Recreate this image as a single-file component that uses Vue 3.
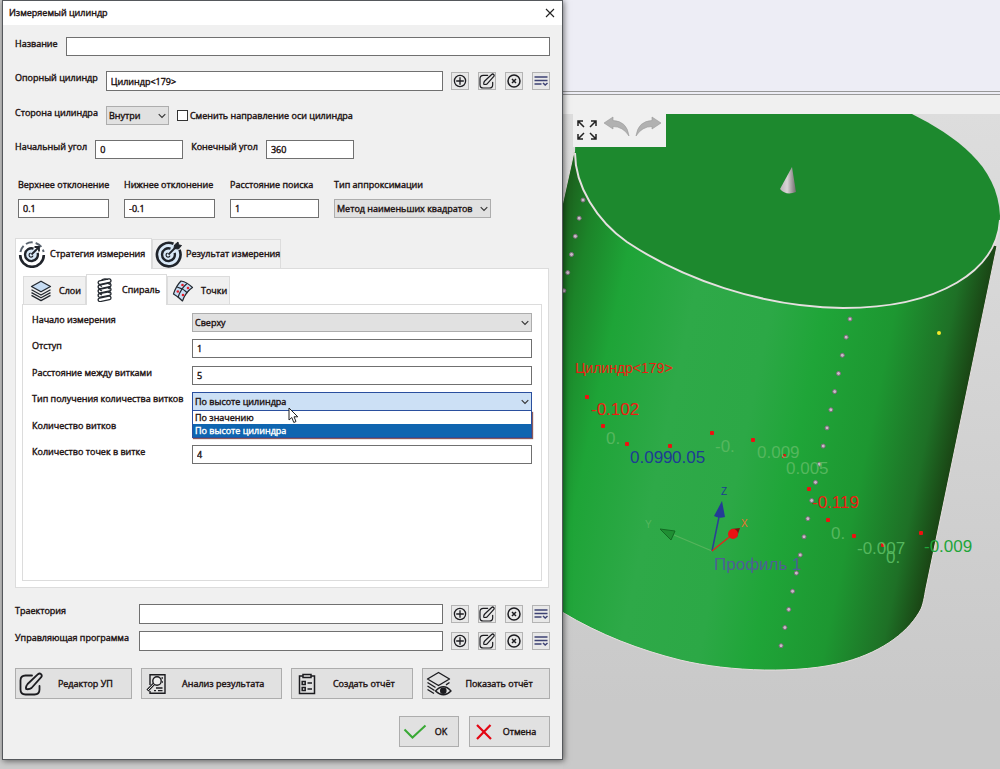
<script setup>
import { ref } from 'vue'

const name       = ref('')
const refCyl     = ref('Цилиндр<179>')
const side       = ref('Внутри')
const flipAxis   = ref(false)
const startAngle = ref('0')
const endAngle   = ref('360')
const upperDev   = ref('0.1')
const lowerDev   = ref('-0.1')
const searchDist = ref('1')
const approx     = ref('Метод наименьших квадратов')
const startFrom  = ref('Сверху')
const offset     = ref('1')
const pitch      = ref('5')
const turnsCount = ref('')
const turnPoints = ref('4')
const trajectory = ref('')
const program    = ref('')

// ── Open drop-down ────────────────────────────────────────────
const turnTypes = ['По значению', 'По высоте цилиндра']
const turnType  = ref('По высоте цилиндра')
const listOpen  = ref(true)

const pick = (t) => {
  turnType.value = t
  listOpen.value = false
}

const tools = [
  { id: 'add', title: 'Добавить' },
  { id: 'edit', title: 'Изменить' },
  { id: 'clear', title: 'Очистить' },
  { id: 'list', title: 'Выбрать' }
]

// ── Scene ─────────────────────────────────────────────────────
const leftDots  = Array.from({ length: 6 }, (_, i) => ({ x: 583 - i * 3.83, y: 200 + i * 18.15 }))
const rightDots = Array.from({ length: 19 }, (_, i) => ({ x: 850 - i * 3.83, y: 319 + i * 18.15 }))

const probes = [
  [587, 397], [603, 426], [627, 444], [670, 446], [712, 433], [753, 440],
  [784, 456], [809, 489], [828, 520], [854, 536], [883, 545], [921, 533]
]

const marks = [
  { x: 591, y: 415, t: '-0.102', c: 'red' },
  { x: 606, y: 444, t: '0.', c: 'pale' },
  { x: 630, y: 463, t: '0.099', c: 'blue' },
  { x: 672, y: 463, t: '0.05', c: 'blue' },
  { x: 715, y: 452, t: '-0.', c: 'pale' },
  { x: 757, y: 458, t: '0.009', c: 'pale' },
  { x: 786, y: 474, t: '0.005', c: 'pale' },
  { x: 812, y: 508, t: '-0.119', c: 'red' },
  { x: 831, y: 539, t: '0.', c: 'pale' },
  { x: 857, y: 554, t: '-0.007', c: 'pale' },
  { x: 886, y: 563, t: '0.', c: 'pale' },
  { x: 924, y: 552, t: '-0.009', c: 'green' },
  { x: 714, y: 570, t: 'Профиль 1', c: 'violet' }
]
</script>

<template>
  <div class="desktop">
    <!-- Shared icon shapes -->
    <svg class="defs" aria-hidden="true">
      <symbol id="i-add" viewBox="0 0 16 16">
        <g fill="none" stroke="#1c1c20" stroke-width="1.3">
          <circle cx="8" cy="8" r="5.6"/><path d="M8 4.2v7.6M4.2 8h7.6"/>
        </g>
      </symbol>
      <symbol id="i-edit" viewBox="0 0 24 24">
        <g fill="none" stroke="#1c1c20" stroke-width="1.8" stroke-linejoin="round" stroke-linecap="round">
          <path d="M13 3.5H6.5Q1.5 3.5 1.5 8.5V17.5Q1.5 22.5 6.5 22.5H15.5Q20.5 22.5 20.5 17.5V14"/>
          <path d="M19 2.2Q20.6 .8 22 2.2Q23.4 3.6 22.2 5.2L12.5 16Q10.8 17.4 7.8 17.2Q6.8 17.2 7 16Q7.2 13.5 8.6 12Z"/>
        </g>
      </symbol>
      <symbol id="i-clear" viewBox="0 0 16 16">
        <g fill="none" stroke="#1c1c20" stroke-width="1.5">
          <circle cx="8" cy="8" r="6"/><path d="M6 6l4 4M10 6l-4 4"/>
        </g>
      </symbol>
      <symbol id="i-list" viewBox="0 0 16 16">
        <g fill="none" stroke="#3d4273" stroke-width="1.5">
          <path d="M1.5 4h13M1.5 7.5h13M1.5 11h7"/><path d="M10 10l2.2 2L14.5 10"/>
        </g>
      </symbol>
      <symbol id="i-chev" viewBox="0 0 8 6">
        <path d="M.7 1.2L4 4.5L7.3 1.2" fill="none" stroke="#333" stroke-width="1.1"/>
      </symbol>
    </svg>

    <!-- Dialog -->
    <form class="dialog" @submit.prevent>
      <header class="titlebar">
        <h1 class="title">Измеряемый цилиндр</h1>
        <button type="button" class="close" aria-label="Закрыть">
          <svg width="10" height="10" viewBox="0 0 10 10"><path d="M1 1l8 8M9 1l-8 8" stroke="#222" stroke-width="1.1"/></svg>
        </button>
      </header>

      <div class="body">
        <div class="row row-name">
          <label for="f-name">Название</label>
          <input id="f-name" v-model="name" class="text grow" type="text">
        </div>

        <div class="row">
          <label for="f-ref">Опорный цилиндр</label>
          <input id="f-ref" v-model="refCyl" class="text tall grow" type="text">
          <div class="tools">
            <button v-for="t in tools" :key="t.id" type="button" class="tool" :aria-label="t.title">
              <svg width="16" height="16"><use :href="'#i-' + t.id"/></svg>
            </button>
          </div>
        </div>

        <div class="row">
          <label for="f-side">Сторона цилиндра</label>
          <span class="select side">
            <select id="f-side" v-model="side"><option>Внутри</option><option>Снаружи</option></select>
            <svg class="chev" width="8" height="6"><use href="#i-chev"/></svg>
          </span>
          <span class="check">
            <input id="f-flip" v-model="flipAxis" type="checkbox">
            <label for="f-flip">Сменить направление оси цилиндра</label>
          </span>
        </div>

        <div class="row">
          <label for="f-start">Начальный угол</label>
          <input id="f-start" v-model="startAngle" class="text angle" type="text">
          <label for="f-end">Конечный угол</label>
          <input id="f-end" v-model="endAngle" class="text angle" type="text">
        </div>

        <div class="quad">
          <div class="cell">
            <label for="f-up">Верхнее отклонение</label>
            <input id="f-up" v-model="upperDev" class="text" type="text">
          </div>
          <div class="cell">
            <label for="f-low">Нижнее отклонение</label>
            <input id="f-low" v-model="lowerDev" class="text" type="text">
          </div>
          <div class="cell">
            <label for="f-dist">Расстояние поиска</label>
            <input id="f-dist" v-model="searchDist" class="text" type="text">
          </div>
          <div class="cell">
            <label for="f-approx">Тип аппроксимации</label>
            <span class="select">
              <select id="f-approx" v-model="approx"><option>Метод наименьших квадратов</option></select>
              <svg class="chev" width="8" height="6"><use href="#i-chev"/></svg>
            </span>
          </div>
        </div>

        <!-- Outer tabs -->
        <div class="tabs outer" role="tablist">
          <button type="button" class="tab active t-strategy" role="tab" aria-selected="true">
            <svg width="28" height="28" viewBox="0 0 28 28" fill="none" stroke="#20242b">
              <path d="M2.2 15A11.8 11.8 0 0 0 25.8 15" stroke-width="2.6"/>
              <path d="M2.4 12A11.8 11.8 0 0 1 25.6 12" stroke-width="2" stroke="#59636e" stroke-dasharray="7 3"/>
              <circle cx="13.5" cy="14.5" r="6.5" fill="#d9e9f8" stroke="none"/>
              <path d="M15.5 8.6A6.4 6.4 0 1 0 19.6 12.8" stroke-width="2.4"/>
              <path d="M12.6 13.2A2 2 0 1 0 15 15.6" stroke-width="1.2"/>
              <path d="M13.5 14.5L20.5 7.5M16.5 7h4.5v4.5" stroke-width="1.8"/>
            </svg>
            Стратегия измерения
          </button>
          <button type="button" class="tab t-result" role="tab" aria-selected="false">
            <svg width="28" height="28" viewBox="0 0 28 28" fill="none" stroke="#20242b">
              <circle cx="13.5" cy="14.5" r="11.5" fill="#d9e9f8" stroke="none"/>
              <path d="M18.5 3.8A11.8 11.8 0 1 0 24.5 9.8" stroke-width="2.6"/>
              <path d="M15.5 8.6A6.4 6.4 0 1 0 19.6 12.8" stroke-width="2.4"/>
              <path d="M12.6 13.2A2 2 0 1 0 15 15.6" stroke-width="1.2"/>
              <path d="M13.5 14.5L21 7" stroke-width="1.8"/>
              <path d="M19 8.5L19.5 5L23 2L23.5 4.8L26.5 5.5L23.5 9Z" fill="#20242b" stroke-width="1"/>
            </svg>
            Результат измерения
          </button>
        </div>

        <div class="panel">
          <!-- Inner tabs -->
          <div class="tabs inner" role="tablist">
            <button type="button" class="tab t-layers" role="tab" aria-selected="false">
              <svg width="22" height="22" viewBox="0 0 22 22" fill="none" stroke="#23282f" stroke-width="1.3" stroke-linejoin="round">
                <path d="M11 1.2L20.5 6.5L11 11.8L1.5 6.5Z" fill="#c6dcf3"/>
                <path d="M1.5 9.8L11 15L20.5 9.8M1.5 12.6L11 17.8L20.5 12.6M1.5 15.4L11 20.6L20.5 15.4"/>
              </svg>
              Слои
            </button>
            <button type="button" class="tab active t-spiral" role="tab" aria-selected="true">
              <svg width="18" height="24" viewBox="0 0 18 24" fill="none" stroke="#23282f" stroke-width="1.3">
                <rect v-for="i in 5" :key="i" x="2" :y="i * 4.3 - 2.6" width="13" height="3.6" rx="1.8" :transform="`rotate(-12 9 ${i * 4.3 - 1})`"/>
                <path d="M5.5 2.5Q7.5 0 12 1.5M4 7.5l2 1M4 12l2 1M4 16l2 1M12 5.5l2 1M12 10l2 1M12 14l2 1"/>
              </svg>
              Спираль
            </button>
            <button type="button" class="tab t-points" role="tab" aria-selected="false">
              <svg width="22" height="24" viewBox="0 0 22 24" fill="none" stroke="#23282f" stroke-width="1.2" stroke-linejoin="round">
                <path d="M9 2Q15 3 20.5 8.5Q13.5 13 10.5 22Q6 17.5 1.5 15Q4 7 9 2Z" fill="#c6dcf3"/>
                <path d="M15 4.5Q8.5 10 6 18.5M5 8Q11 9.5 15.5 14"/>
                <g fill="#e3202b" stroke="none">
                  <circle cx="10.5" cy="6" r="1.3"/><circle cx="16" cy="9" r="1.3"/>
                  <circle cx="5.8" cy="12.5" r="1.3"/><circle cx="11" cy="16" r="1.3"/>
                </g>
              </svg>
              Точки
            </button>
          </div>

          <div class="sheet">
            <div class="fields">
              <label for="f-from">Начало измерения</label>
              <span class="select">
                <select id="f-from" v-model="startFrom"><option>Сверху</option><option>Снизу</option></select>
                <svg class="chev" width="8" height="6"><use href="#i-chev"/></svg>
              </span>

              <label for="f-offset">Отступ</label>
              <input id="f-offset" v-model="offset" class="text" type="text">

              <label for="f-pitch">Расстояние между витками</label>
              <input id="f-pitch" v-model="pitch" class="text" type="text">

              <label for="f-type">Тип получения количества витков</label>
              <span class="select open">
                <select id="f-type" v-model="turnType">
                  <option v-for="t in turnTypes" :key="t">{{ t }}</option>
                </select>
                <svg class="chev" width="8" height="6"><use href="#i-chev"/></svg>
                <ul v-if="listOpen" class="list" role="listbox">
                  <li
                    v-for="t in turnTypes"
                    :key="t"
                    role="option"
                    :aria-selected="t === turnType"
                    :class="['item', t === turnType ? 'current' : '']"
                    @click="pick(t)"
                  >{{ t }}</li>
                </ul>
                <svg class="pointer" width="11" height="17" viewBox="0 0 11 17" aria-hidden="true">
                  <path d="M1 1V13L3.8 10.5L5.8 15.5L8 14.5L6 9.8H9.8Z" fill="#fff" stroke="#222"/>
                </svg>
              </span>

              <label for="f-turns">Количество витков</label>
              <input id="f-turns" v-model="turnsCount" class="text" type="text">

              <label for="f-pts">Количество точек в витке</label>
              <input id="f-pts" v-model="turnPoints" class="text" type="text">
            </div>
          </div>
        </div>

        <div class="row row-out">
          <label for="f-traj">Траектория</label>
          <input id="f-traj" v-model="trajectory" class="text tall grow" type="text">
          <div class="tools">
            <button v-for="t in tools" :key="t.id" type="button" class="tool" :aria-label="t.title">
              <svg width="16" height="16"><use :href="'#i-' + t.id"/></svg>
            </button>
          </div>
        </div>
        <div class="row row-out">
          <label for="f-prog">Управляющая программа</label>
          <input id="f-prog" v-model="program" class="text tall grow" type="text">
          <div class="tools">
            <button v-for="t in tools" :key="t.id" type="button" class="tool" :aria-label="t.title">
              <svg width="16" height="16"><use :href="'#i-' + t.id"/></svg>
            </button>
          </div>
        </div>

        <div class="actions">
          <button type="button" class="btn b-editor">
            <svg width="24" height="24"><use href="#i-edit"/></svg>
            <span>Редактор УП</span>
          </button>
          <button type="button" class="btn b-analysis">
            <svg width="24" height="24" viewBox="0 0 24 24" fill="none" stroke="#1c1c20" stroke-width="1.4">
              <path d="M5 13V2.7H20V21.3H5V19"/>
              <circle cx="12" cy="9" r="4.2" fill="#eee"/>
              <path d="M8.8 12L2.5 18.5" stroke-width="3"/><path d="M8.6 12.2L3 18" stroke="#eee" stroke-width="1"/>
              <path d="M16.5 6h1.5M17 10h1M11 16h6.5M9 18.6h2M13 18.6h4.5"/>
            </svg>
            <span>Анализ результата</span>
          </button>
          <button type="button" class="btn b-report">
            <svg width="24" height="24" viewBox="0 0 24 24" fill="none" stroke="#1c1c20" stroke-width="1.5">
              <path d="M8 4H4.5V21.5H19.5V4H16"/>
              <rect x="8" y="2.5" width="8" height="3"/>
              <rect x="7.2" y="9.5" width="3" height="3"/><rect x="7.2" y="15.5" width="3" height="3"/>
              <path d="M12.5 11h4.5M12.5 17h4.5"/>
            </svg>
            <span>Создать отчёт</span>
          </button>
          <button type="button" class="btn b-show">
            <svg width="26" height="26" viewBox="0 0 26 26" fill="none" stroke="#1c1c20" stroke-width="1.4" stroke-linejoin="round">
              <path d="M12.5 1.5L23.5 8L12.5 14.5L1.5 8Z"/>
              <path d="M1.5 11.5L9.5 16.5M1.5 15L8.5 19.5M1.5 18.5L8 22.5M23.5 11.5L20 13.8"/>
              <path d="M9.5 20Q17.5 11.5 25 20Q17.5 27.5 9.5 20Z"/>
              <circle cx="17.3" cy="19.7" r="2.6" fill="#1c1c20"/>
            </svg>
            <span>Показать отчёт</span>
          </button>
        </div>

        <div class="confirm">
          <button type="submit" class="btn b-ok">
            <svg width="24" height="18" viewBox="0 0 24 18"><path d="M1.5 6.5L9.5 14.5L22.5 2.5" fill="none" stroke="#39a935" stroke-width="2"/></svg>
            <span>OK</span>
          </button>
          <button type="button" class="btn b-cancel">
            <svg width="18" height="18" viewBox="0 0 18 18"><path d="M2 2L16 16M15.5 2L2 16" fill="none" stroke="#e30613" stroke-width="2.2"/></svg>
            <span>Отмена</span>
          </button>
        </div>
      </div>
    </form>

    <!-- 3D view -->
    <main class="view">
      <div class="ribbon"></div>
      <div class="strip"></div>
      <div class="stage">
        <svg class="scene" viewBox="563 114 437 655" preserveAspectRatio="xMinYMin slice">
          <defs>
            <linearGradient id="side" gradientUnits="userSpaceOnUse" x1="574" y1="150" x2="999" y2="239">
              <stop offset="0" stop-color="#1c5f1d"/>
              <stop offset="0.07" stop-color="#1c8429"/>
              <stop offset="0.17" stop-color="#1ea437"/>
              <stop offset="0.34" stop-color="#2ea948"/>
              <stop offset="0.52" stop-color="#2ca846"/>
              <stop offset="0.64" stop-color="#1fa538"/>
              <stop offset="0.8" stop-color="#1d9731"/>
              <stop offset="0.93" stop-color="#1e7026"/>
              <stop offset="1" stop-color="#1a4414"/>
            </linearGradient>
            <linearGradient id="cone">
              <stop offset="0" stop-color="#b9b3b6"/>
              <stop offset="0.45" stop-color="#d9d4d6"/>
              <stop offset="1" stop-color="#6f6a6c"/>
            </linearGradient>
          </defs>

          <path fill="url(#side)" stroke="#e6dede" d="M574 152L562 206V612C600 635 640 650 680 660C730 672 800 674 845 662C885 651 910 630 921 609C924 602 925 592 926 588L997 246L850 200Z"/>
          <path fill="#1d892e" d="M576 114H912C955 136 998 165 1000 216C1000 268 942 308 843 308C760 307 681 278 627 242C597 221 575 186 575 153Z"/>
          <path class="rim" d="M575 153C575 186 597 221 627 242C681 278 760 307 843 308C940 308 997 270 1000 220"/>

          <path fill="url(#cone)" d="M792 167L780 189Q786 196 796 192Z"/>

          <circle v-for="(d, i) in leftDots" :key="'l' + i" class="dot" :cx="d.x" :cy="d.y" r="2"/>
          <rect v-for="(p, i) in probes" :key="'p' + i" class="probe" :x="p[0] - 2" :y="p[1] - 2" width="4" height="4" rx="1"/>
          <circle cx="939" cy="333" r="2" fill="#f4e92a"/>

          <!-- Axes -->
          <path d="M712 551L674 535" stroke="#55b45c" stroke-width="1.2"/>
          <path d="M660 529L675 531L671 540Z" fill="#1f8f33" stroke="#136b23"/>
          <path d="M712 551L719 517" stroke="#2b3f98" stroke-width="1.5"/>
          <path d="M722 501L714 516Q719 519 725 517Z" fill="#243b96"/>
          <path d="M712 551L733 534" stroke="#e8231a" stroke-width="1.3"/>
          <path d="M740 528L731 529L737 537Z" fill="#7c160e"/>
          <circle cx="733" cy="534" r="5" fill="#ea1313"/>
          <text class="axis blue" x="721" y="495">Z</text>
          <text class="axis orange" x="741" y="527">X</text>
          <text class="axis pale" x="645" y="528">Y</text>

          <text class="caption red" x="575" y="373">Цилиндр&lt;179&gt;</text>
          <circle v-for="(d, i) in rightDots" :key="'r' + i" class="dot" :cx="d.x" :cy="d.y" r="2"/>
          <text v-for="(m, i) in marks" :key="'m' + i" :class="['mark', m.c]" :x="m.x" :y="m.y">{{ m.t }}</text>
        </svg>

        <div class="viewbar">
          <button type="button" aria-label="Показать всё">
            <svg width="22" height="22" viewBox="0 0 22 22" fill="none" stroke="#222" stroke-width="1.5">
              <path d="M2 7V2h5M2 2l6 6M15 2h5v5M20 2l-6 6M2 15v5h5M2 20l6-6M15 20h5v-5M20 20l-6-6"/>
            </svg>
          </button>
          <button type="button" aria-label="Назад">
            <svg width="27" height="22" viewBox="0 0 27 22"><path d="M1 7L10 1V4.5Q24 5 26 20Q20 10.5 10 10.5V13Z" fill="#b1b1b1" stroke="#999" stroke-width=".6"/></svg>
          </button>
          <button type="button" aria-label="Вперёд">
            <svg width="27" height="22" viewBox="0 0 27 22"><path d="M26 7L17 1V4.5Q3 5 1 20Q7 10.5 17 10.5V13Z" fill="#b1b1b1" stroke="#999" stroke-width=".6"/></svg>
          </button>
        </div>
      </div>
    </main>
  </div>
</template>

<style>
body {
  margin: 0;
  background: #cbcbcb;
}
</style>

<style scoped>
.desktop {
  display: grid;
  grid-template-columns: minmax(0, 563fr) minmax(0, 437fr);
  min-height: 100vh;
  font-family: 'Open Sans', 'Noto Sans', sans-serif;
  font-size: 9px;
  font-weight: 400;
  line-height: 14px;
  color: #1f1414;
  background: #cbcbcb;
}
.desktop *,
.desktop *::before { box-sizing: border-box; }
.defs {
  position: absolute;
  width: 0;
  height: 0;
}

/* Dialog window */
.dialog {
  position: relative;
  z-index: 1;
  margin: 0 0 9px 2px;
  background: #f0f0f0;
  border: 1px solid #55585c;
  box-shadow: 1px 1px 6px rgba(0,0,0,0.55);
  -webkit-text-stroke: 0.4px currentColor;
}
.titlebar {
  display: flex;
  align-items: center;
  justify-content: space-between;
  height: 24px;
  padding: 0 6px;
  background: #fff;
}
.title {
  margin: 0;
  font-size: inherit;
  font-weight: inherit;
}
.close {
  display: flex;
  padding: 1px;
  border: none;
  background: none;
}
.body {
  display: flex;
  flex-direction: column;
  padding: 12px 12px;
}

/* Rows */
.row {
  display: flex;
  align-items: flex-start;
  gap: 8px;
  margin-top: 15px;
}
.row-name { margin-top: 0; }
label { white-space: nowrap; }
.grow { flex: 1; }

.text {
  min-width: 0;
  width: 100%;
  height: 19px;
  padding: 0 4px;
  border: 1px solid #707070;
  border-radius: 0;
  outline: none;
  background: #fff;
  font: inherit;
  color: inherit;
}
.text.tall { height: 20px; }
.text.grow { width: auto; }
.text.angle { width: 88px; }

.tools {
  display: flex;
  gap: 9px;
  padding-top: 1px;
}
.tool {
  display: flex;
  align-items: center;
  justify-content: center;
  width: 18px;
  height: 18px;
  padding: 0;
  border: 1px solid #b4b4b4;
  background: #e8e8e8;
}

.select {
  position: relative;
  display: block;
}
.select select {
  display: block;
  width: 100%;
  height: 19px;
  padding: 0 14px 0 2px;
  border: 1px solid #adadad;
  border-radius: 0;
  outline: none;
  appearance: none;
  background: #e1e1e1;
  font: inherit;
  color: inherit;
}
.select.side { width: 63px; }
.chev {
  position: absolute;
  top: 7px;
  right: 3px;
  pointer-events: none;
}
.select.open select {
  border-color: #2a4f9e;
  background: #cce0f5;
}
.list {
  position: absolute;
  z-index: 2;
  top: 19px;
  left: 0;
  right: 0;
  margin: 0;
  padding: 0;
  list-style: none;
  border: 1px solid #2a4f9e;
  border-top: none;
  background: #fff;
  box-shadow: 1px 1px 1px #8c5a5a;
}
.item {
  height: 13px;
  padding: 0 2px;
  line-height: 13px;
}
.item.current {
  background: #0f65b0;
  color: #fff;
}
.pointer {
  position: absolute;
  z-index: 3;
  top: 15px;
  left: 96px;
}

.check {
  display: flex;
  align-items: center;
  gap: 2px;
  height: 19px;
}
.check input {
  width: 11px;
  height: 11px;
  margin: 0;
  border: 1px solid #333;
  appearance: none;
  background: #fff;
}
.check input:checked { background: #0f65b0; }

/* Deviations */
.quad {
  display: grid;
  grid-template-columns: 91px 91px 89px 157px;
  gap: 15px;
  margin-top: 19px;
  padding-left: 3px;
}
.cell {
  display: flex;
  flex-direction: column;
  gap: 7px;
}

/* Tabs */
.tabs {
  display: flex;
  align-items: flex-end;
}
.tab {
  display: flex;
  align-items: center;
  padding: 0 2px;
  border: 1px solid #dcdcdc;
  border-bottom: none;
  background: #f0f0f0;
  font: inherit;
  color: inherit;
  white-space: nowrap;
}
.tab svg { flex-shrink: 0; }
.tab.active {
  position: relative;
  margin-bottom: -1px;
  background: #fff;
}
.outer { margin-top: 20px; }
.outer .tab { height: 29px; }
.outer .tab.active { height: 31px; }
.t-strategy { width: 137px; gap: 4px; }
.t-result { width: 129px; gap: 3px; }
.inner .tab { height: 28px; }
.inner .tab.active { height: 31px; }
.t-layers { width: 63px; gap: 7px; padding-left: 6px; }
.t-spiral { width: 81px; gap: 8px; padding-left: 9px; }
.t-points { width: 63px; gap: 7px; padding-left: 4px; }

.panel {
  padding: 5px 6px 6px;
  border: 1px solid #dcdcdc;
  background: #fff;
  margin-right: 1px;
}
.inner { padding-left: 1px; }
.sheet {
  min-height: 277px;
  padding: 8px 9px;
  border: 1px solid #dcdcdc;
}
.fields {
  display: grid;
  grid-template-columns: 160px minmax(0, 1fr);
  align-content: space-between;
  align-items: start;
  min-height: 151px;
}

/* Output rows */
.row-out { margin-top: 7px; }
.row-out label { width: 116px; }
.panel + .row-out { margin-top: 16px; }

/* Buttons */
.btn {
  display: flex;
  align-items: center;
  height: 31px;
  padding: 0 3px;
  border: 1px solid #adadad;
  background: #e1e1e1;
  font: inherit;
  color: inherit;
  white-space: nowrap;
}
.btn svg { flex-shrink: 0; }
.btn span {
  flex: 1;
  text-align: center;
}
.actions {
  display: flex;
  gap: 9px;
  margin-top: 17px;
}
.b-editor   { flex: 116 0 0; }
.b-analysis { flex: 142 0 0; }
.b-report   { flex: 122 0 0; }
.b-show     { flex: 128 0 0; }
.confirm {
  display: flex;
  justify-content: flex-end;
  gap: 10px;
  margin-top: 17px;
}
.b-ok { width: 60px; }
.b-cancel { width: 81px; padding-left: 5px; }

/* 3D view */
.view {
  display: flex;
  flex-direction: column;
}
.ribbon {
  height: 95px;
  border-bottom: 4px double #999;
  background: #ededf5;
}
.strip {
  height: 19px;
  background: #f0f0f0;
}
.stage {
  position: relative;
  flex: 1;
  min-height: 480px;
  overflow: hidden;
  background: linear-gradient(#dddddd, #c9c9c9 90%);
}
.scene {
  position: absolute;
  inset: 0;
  width: 100%;
  height: 100%;
  font-family: 'Liberation Sans', Arial, sans-serif;
  font-weight: 400;
}
.rim {
  fill: none;
  stroke: #e6e0e0;
  stroke-width: 2;
}
.dot {
  fill: #c9bcc8;
  stroke: #7d6a7c;
}
.probe { fill: #ee1111; }
.mark { font-size: 17px; }
.caption { font-size: 14px; }
.axis { font-size: 10px; }
.red { fill: #ee1c12; }
.blue { fill: #1d3c94; }
.pale { fill: #55b75e; }
.green { fill: #1fa53a; }
.violet { fill: #4f5f94; }
.orange { fill: #f07030; }

.viewbar {
  position: absolute;
  top: 0;
  left: 10px;
  display: flex;
  align-items: flex-start;
  gap: 5px;
  height: 33px;
  padding: 2px 4px 2px 3px;
  background: #f0f0f0;
}
.viewbar button {
  display: flex;
  padding: 0;
  border: none;
  background: none;
}
.viewbar button:first-child { padding-top: 3px; }
</style>
